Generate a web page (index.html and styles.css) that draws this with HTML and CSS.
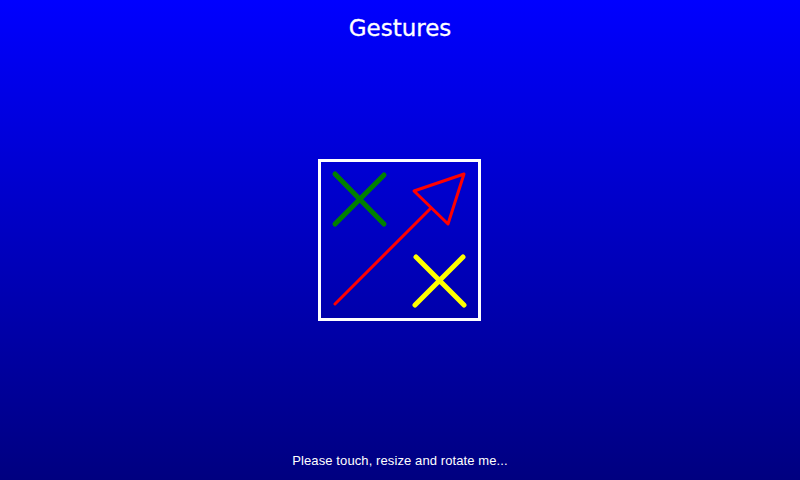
FILE: index.html
```html
<!DOCTYPE html>
<html>
<head>
<meta charset="utf-8">
<link rel="stylesheet" href="styles.css">
</head>
<body>
<div class="screen">
  <header class="title">Gestures</header>
  <main class="stage">
    <div class="card">
      <svg class="art" width="157" height="156" viewBox="321 162 157 156">
        <g fill="none" stroke-linecap="round" stroke-linejoin="round">
          <path d="M335 174 L384 224 M384 175 L335 224" stroke="#008000" stroke-width="5"/>
          <path d="M416 257 L464 305 M463 257 L415 305" stroke="#ffff00" stroke-width="5"/>
          <path d="M335 304 L431 208" stroke="#ff0000" stroke-width="3"/>
          <path d="M414 191 L464 174 L448 224 Z" stroke="#ff0000" stroke-width="3"/>
        </g>
      </svg>
    </div>
  </main>
  <footer class="hint">Please touch, resize and rotate me...</footer>
</div>
</body>
</html>
```
FILE: styles.css
```css
html, body {
  margin: 0;
  padding: 0;
}
.screen {
  width: 800px;
  height: 480px;
  display: flex;
  flex-direction: column;
  background: linear-gradient(to bottom, #0000ff 0%, #000080 100%);
  color: #ffffff;
  overflow: hidden;
}
.title {
  height: 40px;
  box-sizing: border-box;
  padding-top: 15px;
  font-family: "DejaVu Sans", sans-serif;
  font-size: 23px;
  line-height: 26px;
  text-align: center;
  -webkit-text-stroke: 0.3px #ffffff;
}
.stage {
  flex: 1;
  display: flex;
  align-items: center;
  justify-content: center;
}
.card {
  width: 157px;
  height: 156px;
  border: 3px solid #ffffff;
  margin-left: -1px;
}
.art {
  display: block;
}
.hint {
  height: 40px;
  box-sizing: border-box;
  padding-top: 13px;
  font-family: "Liberation Sans", sans-serif;
  font-size: 13px;
  line-height: 15px;
  letter-spacing: 0.1px;
  text-align: center;
}
```
